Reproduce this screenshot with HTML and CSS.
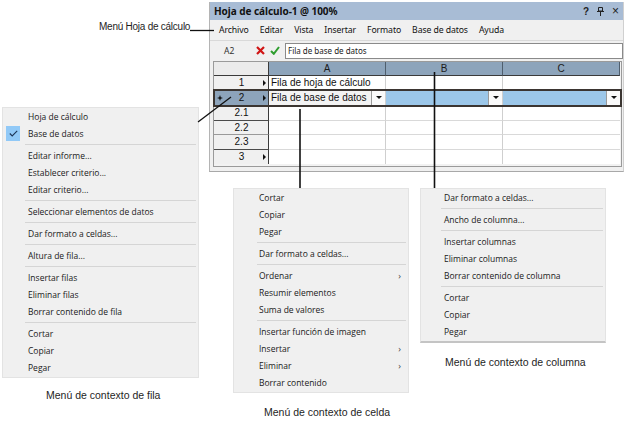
FILE: index.html
```html
<!DOCTYPE html>
<html lang="es">
<head>
<meta charset="utf-8">
<title>Hoja de cálculo</title>
<link rel="stylesheet" href="styles.css">
</head>
<body>
<div class="canvas">
  <div class="label lbl-sheet">Menú Hoja de cálculo</div>

  <div class="window">
    <div class="titlebar">
      <span class="title">Hoja de cálculo-1 @ 100%</span>
      <div class="tb-icons">
        <span class="tb-q">?</span>
        <svg class="tb-pin" width="7" height="9" viewBox="0 0 7 9"><path d="M1.5 0.5h4v3.5h-4z M0 4.5h7 M3.5 4.5v4.5" fill="none" stroke="#222" stroke-width="1"/></svg>
        <span class="tb-x">×</span>
      </div>
    </div>
    <div class="menubar">
      <span>Archivo</span><span>Editar</span><span>Vista</span><span>Insertar</span><span>Formato</span><span>Base de datos</span><span>Ayuda</span>
    </div>
    <div class="formulabar">
      <span class="cellref">A2</span>
      <svg class="fx-cancel" width="9" height="9" viewBox="0 0 9 9"><path d="M1 1L8 8M8 1L1 8" stroke="#d01515" stroke-width="2.2" fill="none"/></svg>
      <svg class="fx-ok" width="10" height="9" viewBox="0 0 10 9"><path d="M1 5L3.8 7.8L9 1" stroke="#2f9e2f" stroke-width="2" fill="none"/></svg>
      <div class="fx-input">Fila de base de datos</div>
    </div>
    <div class="grid-wrap">
      <div class="grid">
        <div class="corner"></div>
        <div class="ch">A</div>
        <div class="ch">B</div>
        <div class="ch ch-last">C</div>

        <div class="rh"><span class="rh-side"></span><span class="rh-num">1</span><span class="rh-side"><i class="rarrow"></i></span></div>
        <div class="cell">Fila de hoja de cálculo</div>
        <div class="cell"></div>
        <div class="cell cell-last"></div>

        <div class="rh rh-sel"><span class="rh-side"><svg width="6" height="6" viewBox="0 0 6 6"><path d="M3 0L3.8 2.2L6 3L3.8 3.8L3 6L2.2 3.8L0 3L2.2 2.2Z" fill="#111"/></svg></span><span class="rh-num">2</span><span class="rh-side"><i class="rarrow"></i></span></div>
        <div class="cell cell-db">Fila de base de datos<span class="dd"><i class="darrow"></i></span></div>
        <div class="cell cell-blue"><span class="dd"><i class="darrow"></i></span></div>
        <div class="cell cell-blue cell-last"><span class="dd"><i class="darrow"></i></span></div>

        <div class="rh"><span class="rh-side"></span><span class="rh-num">2.1</span><span class="rh-side"></span></div>
        <div class="cell"></div>
        <div class="cell"></div>
        <div class="cell cell-last"></div>

        <div class="rh rh-light"><span class="rh-side"></span><span class="rh-num">2.2</span><span class="rh-side"></span></div>
        <div class="cell"></div>
        <div class="cell"></div>
        <div class="cell cell-last"></div>

        <div class="rh"><span class="rh-side"></span><span class="rh-num">2.3</span><span class="rh-side"></span></div>
        <div class="cell"></div>
        <div class="cell"></div>
        <div class="cell cell-last"></div>

        <div class="rh rh-end"><span class="rh-side"></span><span class="rh-num">3</span><span class="rh-side"><i class="rarrow"></i></span></div>
        <div class="cell cell-end"></div>
        <div class="cell cell-end"></div>
        <div class="cell cell-end cell-last"></div>
      </div>
      <div class="row-select"></div>
    </div>
  </div>

  <div class="menu menu-row">
    <div class="item"><span class="gutter"></span>Hoja de cálculo</div>
    <div class="item"><span class="gutter checked"><svg width="9" height="7" viewBox="0 0 9 7"><path d="M0.8 3.5L3.2 6L8.2 0.8" stroke="#1d3557" stroke-width="1.1" fill="none"/></svg></span>Base de datos</div>
    <div class="sep"></div>
    <div class="item"><span class="gutter"></span>Editar informe...</div>
    <div class="item"><span class="gutter"></span>Establecer criterio...</div>
    <div class="item"><span class="gutter"></span>Editar criterio...</div>
    <div class="sep"></div>
    <div class="item"><span class="gutter"></span>Seleccionar elementos de datos</div>
    <div class="sep"></div>
    <div class="item"><span class="gutter"></span>Dar formato a celdas...</div>
    <div class="sep"></div>
    <div class="item"><span class="gutter"></span>Altura de fila...</div>
    <div class="sep"></div>
    <div class="item"><span class="gutter"></span>Insertar filas</div>
    <div class="item"><span class="gutter"></span>Eliminar filas</div>
    <div class="item"><span class="gutter"></span>Borrar contenido de fila</div>
    <div class="sep"></div>
    <div class="item"><span class="gutter"></span>Cortar</div>
    <div class="item"><span class="gutter"></span>Copiar</div>
    <div class="item"><span class="gutter"></span>Pegar</div>
  </div>

  <div class="menu menu-cell">
    <div class="item">Cortar</div>
    <div class="item">Copiar</div>
    <div class="item">Pegar</div>
    <div class="sep"></div>
    <div class="item">Dar formato a celdas...</div>
    <div class="sep"></div>
    <div class="item">Ordenar<span class="sub">›</span></div>
    <div class="item">Resumir elementos</div>
    <div class="item">Suma de valores</div>
    <div class="sep"></div>
    <div class="item">Insertar función de imagen</div>
    <div class="item">Insertar<span class="sub">›</span></div>
    <div class="item">Eliminar<span class="sub">›</span></div>
    <div class="item">Borrar contenido</div>
  </div>

  <div class="menu menu-col">
    <div class="item">Dar formato a celdas...</div>
    <div class="sep"></div>
    <div class="item">Ancho de columna...</div>
    <div class="sep"></div>
    <div class="item">Insertar columnas</div>
    <div class="item">Eliminar columnas</div>
    <div class="item">Borrar contenido de columna</div>
    <div class="sep"></div>
    <div class="item">Cortar</div>
    <div class="item">Copiar</div>
    <div class="item">Pegar</div>
  </div>

  <div class="label lbl-row">Menú de contexto de fila</div>
  <div class="label lbl-cell">Menú de contexto de celda</div>
  <div class="label lbl-col">Menú de contexto de columna</div>

  <svg class="leaders" width="628" height="424" viewBox="0 0 628 424">
    <path d="M190 30.5H214" stroke="#111" stroke-width="1.3"/>
    <path d="M198 122L231 97" stroke="#111" stroke-width="1.3"/>
    <path d="M300 109V188" stroke="#111" stroke-width="1.6"/>
    <path d="M434.5 72V188" stroke="#111" stroke-width="1.6"/>
  </svg>
</div>
</body>
</html>
```

FILE: styles.css
```css
html, body {
  margin: 0;
  padding: 0;
  background: #ffffff;
}

.canvas {
  position: relative;
  width: 628px;
  height: 424px;
  overflow: hidden;
  background: #ffffff;
  font-family: "Open Sans", "Noto Sans", sans-serif;
  color: #1a1a1a;
}

/* ---------- labels ---------- */
.label {
  position: absolute;
  font-family: "Liberation Sans", Arial, sans-serif;
  font-size: 10.5px;
  color: #1e1e1e;
  white-space: nowrap;
  line-height: 12px;
}
.lbl-sheet { left: 99px; top: 21px; font-size: 10px; letter-spacing: -0.25px; }
.lbl-row { left: 46px; top: 389px; }
.lbl-cell { left: 264px; top: 406px; }
.lbl-col { left: 445px; top: 356px; }

.leaders {
  position: absolute;
  left: 0;
  top: 0;
  pointer-events: none;
}

/* ---------- spreadsheet window ---------- */
.window {
  position: absolute;
  left: 209px;
  top: 2px;
  width: 415px;
  height: 170px;
  box-sizing: border-box;
  background: #f0f0f0;
  border-left: 1px solid #b4b4b4;
  border-right: 1px solid #d0d0d0;
  border-bottom: 1px solid #a8a8a8;
  display: flex;
  flex-direction: column;
}

.titlebar {
  height: 18px;
  background: #a8bcd5;
  display: flex;
  align-items: center;
  padding: 0 4px 0 4px;
}
.title {
  font-family: "Noto Sans", "Open Sans", sans-serif;
  font-weight: 700;
  font-size: 10px;
  color: #111;
  letter-spacing: -0.05px;
}
.tb-icons {
  margin-left: auto;
  display: flex;
  align-items: center;
  gap: 8px;
  font-family: "Liberation Sans", Arial, sans-serif;
  font-weight: 700;
  font-size: 10px;
  color: #222;
}
.tb-x { font-size: 12px; font-weight: 400; }

.menubar {
  height: 20px;
  display: flex;
  align-items: center;
  gap: 11px;
  padding-left: 9px;
  font-family: "Noto Sans", "Open Sans", sans-serif;
  font-size: 8.7px;
  letter-spacing: -0.1px;
  color: #111;
}

.formulabar {
  height: 19px;
  border-top: 1px solid #d9d9d9;
  display: flex;
  align-items: center;
  font-family: "Noto Sans", "Open Sans", sans-serif;
  font-size: 8.5px;
}
.cellref {
  width: 11px;
  margin-left: 14px;
  color: #333;
}
.fx-cancel { margin-left: 21px; }
.fx-ok { margin-left: 5px; }
.fx-input {
  margin-left: 5px;
  flex: 1;
  height: 16px;
  box-sizing: border-box;
  background: #fff;
  border: 1px solid #8a8a8a;
  padding-left: 2px;
  line-height: 14px;
  font-size: 8px;
  color: #222;
}

.grid-wrap {
  position: relative;
  margin: 1px 0 0 3px;
  width: 409px;
  height: 106px;
  box-sizing: border-box;
  border: 1px solid #9a9a9a;
  background: #f2f2f2;
}

.grid {
  display: grid;
  grid-template-columns: 55px 117px 117px 117px;
  grid-template-rows: 14px 14px 16px 15px 14px 15px 14px;
  font-family: "Liberation Sans", Arial, sans-serif;
  font-size: 10px;
  color: #111;
}
.grid > div { box-sizing: border-box; }

.corner {
  background: #ebebeb;
  border-right: 1px solid #3a3a3a;
  border-bottom: 1px solid #3a3a3a;
}
.ch {
  background: #8da4bb;
  border-right: 1px solid #4f5e6d;
  border-bottom: 1px solid #3a3a3a;
  text-align: center;
  line-height: 13px;
  color: #1c1c1c;
}
.ch-last { border-right: 1px solid #4f5e6d; }

.rh {
  background: #f0f0f0;
  border-right: 1px solid #3a3a3a;
  border-bottom: 1px solid #4a4a4a;
  display: flex;
  align-items: center;
  padding: 0 2px 0 3px;
}
.rh-light { border-bottom-color: #9a9a9a; }
.rh-end { border-bottom: none; }
.rh-sel { background: #8da4bb; }
.rh-side {
  width: 6px;
  display: flex;
  align-items: center;
  justify-content: center;
}
.rh-num {
  flex: 1;
  text-align: center;
  line-height: 12px;
}
.rarrow {
  display: block;
  width: 0;
  height: 0;
  border-left: 3px solid #111;
  border-top: 3px solid transparent;
  border-bottom: 3px solid transparent;
  margin-left: 2px;
}

.cell {
  background: #ffffff;
  border-right: 1px solid #cfcfcf;
  border-bottom: 1px solid #d9d9d9;
  padding-left: 2px;
  display: flex;
  align-items: center;
  white-space: nowrap;
  line-height: 12px;
}
.cell-last { border-right: none; }
.cell-end { border-bottom: none; }
.cell-db { background: #f3f3f3; }
.cell-blue { background: #9cc7e9; }

.dd {
  margin-left: auto;
  width: 14px;
  height: 14px;
  box-sizing: border-box;
  background: #fafafa;
  border-left: 1px solid #9a9a9a;
  display: flex;
  align-items: center;
  justify-content: center;
}
.darrow {
  display: block;
  width: 0;
  height: 0;
  border-top: 3px solid #111;
  border-left: 3px solid transparent;
  border-right: 3px solid transparent;
}

.row-select {
  position: absolute;
  left: -1px;
  right: -1px;
  top: 27px;
  height: 18px;
  border: 2px solid #3b3531;
  box-sizing: border-box;
  pointer-events: none;
}

/* ---------- context menus ---------- */
.menu {
  position: absolute;
  box-sizing: border-box;
  background: #f0f0f0;
  border: 1px solid #e3e3e3;
  padding: 0 0 1px 0;
  font-family: "Open Sans", "Noto Sans", sans-serif;
  font-size: 8.5px;
  color: #1a1a1a;
}
.item {
  height: 17px;
  display: flex;
  align-items: center;
  white-space: nowrap;
}
.sep {
  height: 1px;
  background: #d5d5d5;
  margin: 2px 2px 2px 0;
}

.menu-row { left: 2px; top: 107px; width: 197px; }
.menu-row .item { padding-left: 3px; }
.menu-row .sep { margin-left: 22px; }
.gutter {
  width: 14px;
  height: 15px;
  margin-right: 8px;
  display: flex;
  align-items: center;
  justify-content: center;
}
.gutter.checked { background: #91c9f7; }

.menu-cell { left: 233px; top: 188px; width: 176px; }
.menu-cell .item { padding-left: 25px; padding-right: 7px; }
.menu-cell .sep { margin-left: 23px; }

.menu-col {
  left: 420px;
  top: 188px;
  width: 186px;
  border-bottom: 2px solid #c4c4c4;
}
.menu-col .item { padding-left: 23px; }
.menu-col .sep { margin-left: 20px; }

.sub {
  margin-left: auto;
  font-size: 9px;
  color: #444;
}
```
